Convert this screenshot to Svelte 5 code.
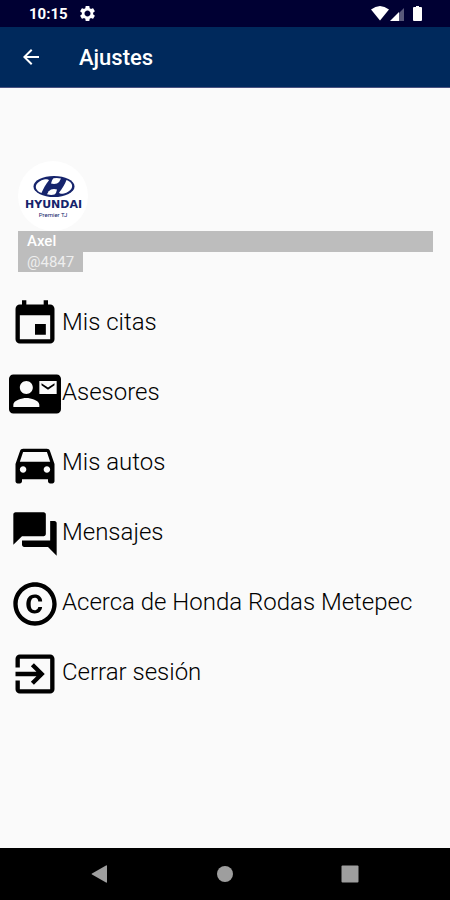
<script>
    let { time = "10:15", title = "Ajustes" } = $props();

    let user = $state({ name: "Axel", handle: "@4847" });

    // Icon paths are drawn on a 24x24 grid
    const items = [
        {
            label: "Mis citas",
            icon: "M17 12h-5v5h5v-5zM16 1v2H8V1H6v2H5c-1.11 0-1.99.9-1.99 2L3 19c0 1.1.89 2 2 2h14c1.1 0 2-.9 2-2V5c0-1.1-.9-2-2-2h-1V1h-2zm3 18H5V8h14v11z",
        },
        {
            label: "Asesores",
            icon: "M21 8V7l-3 2-3-2v1l3 2 3-2zm1-5H2C.9 3 0 3.900 0 5v14c0 1.100.9 2 2 2h20c1.100 0 1.990-.9 1.990-2L24 5c0-1.100-.9-2-2-2zM8 6c1.660 0 3 1.340 3 3s-1.340 3-3 3-3-1.340-3-3 1.340-3 3-3zm6 12H2v-1c0-2 4-3.100 6-3.100s6 1.100 6 3.100v1zm8-6h-8V6h8v6z",
        },
        {
            label: "Mis autos",
            icon: "M18.920 6.010C18.720 5.420 18.160 5 17.500 5h-11c-.66 0-1.210.42-1.420 1.010L3 12v8c0 .55.45 1 1 1h1c.55 0 1-.45 1-1v-1h12v1c0 .55.45 1 1 1h1c.55 0 1-.45 1-1v-8l-2.080-5.990zM6.500 16c-.83 0-1.500-.67-1.500-1.500S5.670 13 6.500 13s1.500.67 1.500 1.500S7.330 16 6.500 16zm11 0c-.83 0-1.500-.67-1.500-1.500s.67-1.500 1.500-1.500 1.500.67 1.500 1.500-.67 1.500-1.500 1.500zM5 11l1.500-4.500h11L19 11H5z",
        },
        {
            label: "Mensajes",
            icon: "M21 6h-2v9H6v2c0 .55.45 1 1 1h11l4 4V7c0-.55-.45-1-1-1zm-4 6V3c0-.55-.45-1-1-1H3c-.55 0-1 .45-1 1v14l4-4h10c.55 0 1-.45 1-1z",
        },
        {
            label: "Acerca de Honda Rodas Metepec",
            icon: "M10.080 10.860c.05-.33.16-.62.3-.87s.34-.46.59-.62c.24-.15.54-.22.91-.23.23.01.44.05.63.13.2.09.38.21.52.36s.25.33.34.53.13.42.14.64h1.790c-.02-.47-.11-.9-.28-1.290s-.4-.73-.7-1.010-.66-.5-1.080-.66-.88-.23-1.390-.23c-.65 0-1.220.11-1.700.34s-.88.53-1.200.92-.56.84-.71 1.360S8 11.290 8 11.870v.27c0 .58.08 1.120.23 1.640s.39.97.71 1.350.72.69 1.200.91 1.050.34 1.700.34c.47 0 .91-.08 1.320-.23s.77-.36 1.080-.63.56-.58.74-.94.29-.74.3-1.150h-1.790c-.01.21-.06.4-.15.58s-.21.33-.36.46-.32.23-.52.3c-.19.07-.39.09-.6.1-.36-.01-.66-.08-.89-.23-.25-.16-.45-.37-.59-.62s-.25-.55-.3-.88-.08-.67-.08-1v-.27c0-.35.03-.68.08-1.010zM12 2C6.480 2 2 6.480 2 12s4.480 10 10 10 10-4.480 10-10S17.520 2 12 2zm0 18c-4.410 0-8-3.590-8-8s3.590-8 8-8 8 3.590 8 8-3.590 8-8 8z",
        },
        {
            label: "Cerrar sesión",
            icon: "M10.090 15.590L11.500 17l5-5-5-5-1.410 1.410L12.670 11H3v2h9.670l-2.580 2.590zM19 3H5c-1.110 0-2 .9-2 2v4h2V5h14v14H5v-4H3v4c0 1.100.89 2 2 2h14c1.100 0 2-.9 2-2V5c0-1.100-.9-2-2-2z",
        },
    ];
</script>

<div class="screen">
    <div class="status-bar">
        <span class="time">{time}</span>
        <svg class="gear" viewBox="2 2 20 20" aria-hidden="true">
            <path fill-rule="evenodd" d="M19.430 12.980c.04-.32.07-.64.07-.98s-.03-.66-.07-.98l2.110-1.650c.19-.15.24-.42.12-.64l-2-3.460c-.12-.22-.39-.3-.61-.22l-2.490 1c-.52-.4-1.080-.73-1.690-.98l-.38-2.650C14.460 2.180 14.250 2 14 2h-4c-.25 0-.46.18-.49.42l-.38 2.650c-.61.25-1.170.59-1.690.98l-2.490-1c-.23-.09-.49 0-.61.22l-2 3.460c-.13.22-.07.49.12.64l2.110 1.650c-.04.32-.07.65-.07.98s.03.66.07.98l-2.110 1.650c-.19.15-.24.42-.12.64l2 3.460c.12.22.39.3.61.22l2.490-1c.52.4 1.080.73 1.690.98l.38 2.650c.03.24.24.42.49.42h4c.25 0 .46-.18.49-.42l.38-2.650c.61-.25 1.170-.59 1.690-.98l2.490 1c.23.09.49 0 .61-.22l2-3.460c.12-.22.07-.49-.12-.64l-2.110-1.650zM12 16c-2.200 0-4-1.800-4-4s1.800-4 4-4 4 1.800 4 4-1.800 4-4 4z" />
        </svg>
        <svg class="signals" viewBox="0 0 52 18" aria-hidden="true">
            <path d="M0 4.500Q9-2.500 18 4.500L9 15.500z" />
            <path d="M33 3v13h-5V8z" opacity="0.35" />
            <path d="M28 7v9h-9z" />
            <path d="M43 2h2V1h3v1h2q1 0 1 1v12q0 1-1 1h-7q-1 0-1-1V3q0-1 1-1z" />
        </svg>
    </div>

    <header class="app-bar">
        <button type="button" class="back" aria-label="Atrás">
            <svg viewBox="0 0 24 24" aria-hidden="true">
                <path d="M20 11H7.830l5.590-5.590L12 4l-8 8 8 8 1.410-1.410L7.830 13H20v-2z" />
            </svg>
        </button>
        <h1>{title}</h1>
    </header>

    <main>
        <section class="profile">
            <svg class="avatar" viewBox="0 0 70 70" role="img" aria-label="Hyundai Premier TJ">
                <circle cx="35" cy="35" r="35" fill="#fff" />
                <ellipse cx="36" cy="25.500" rx="20.500" ry="10.500" fill="#16246c" />
                <!-- white areas around the slanted H -->
                <path fill="#fff" d="M26 18.500C19 20.500 16 25 19 29C20 30.500 22 31.500 23.500 32C25 28 28 23 31 19.200C30 18 28 18 26 18.500z" />
                <path fill="#fff" d="M46 32.500C53 30.500 56 26 53 22C52 20.500 50 19.500 48.500 19C47 23 44 28 41 31.800C42 33 44 33 46 32.500z" />
                <path fill="#fff" d="M35.500 17.300Q39 16.500 43 17.500Q41.500 21.500 39 22.500Q36 23.300 33 22.500Q33.500 19 35.500 17.300z" />
                <path fill="#fff" d="M36.500 33.500Q33 34.500 29 33.200Q30.500 29.500 33 28.500Q36 27.700 39 28.500Q38.500 32 36.500 33.500z" />
                <text class="brand" x="35.500" y="47" text-anchor="middle">HYUNDAI</text>
                <text class="dealer" x="35" y="56" text-anchor="middle">Premier TJ</text>
            </svg>
            <div class="name">{user.name}</div>
            <div class="handle">{user.handle}</div>
        </section>

        <nav>
            {#each items as item}
                <button type="button" class="item">
                    <svg viewBox="0 0 24 24" aria-hidden="true">
                        <path d={item.icon} />
                    </svg>
                    <span>{item.label}</span>
                </button>
            {/each}
        </nav>
    </main>

    <footer class="nav-bar">
        <button type="button" aria-label="Volver">
            <svg viewBox="0 0 18 18" aria-hidden="true"><path d="M16 1v16q0 1-1 .5L1 9.500q-1-.5 0-1L15 .5q1-.5 1 .5z" /></svg>
        </button>
        <button type="button" aria-label="Inicio">
            <svg viewBox="0 0 18 18" aria-hidden="true"><circle cx="9" cy="9" r="8" /></svg>
        </button>
        <button type="button" aria-label="Recientes">
            <svg viewBox="0 0 18 18" aria-hidden="true"><rect width="17" height="17" x="0.500" y="0.500" rx="1" /></svg>
        </button>
    </footer>
</div>

<style>
    :global(body) {
        background: #fafafa;
    }

    .screen {
        display: flex;
        flex-direction: column;
        min-height: 100vh;
        background: #fafafa;
        color: #000;
        font-family: Roboto, "Liberation Sans", sans-serif;
    }

    button {
        padding: 0;
        border: 0;
        background: none;
        color: inherit;
        font: inherit;
        cursor: pointer;
    }

    svg {
        display: block;
        fill: currentColor;
    }

    .status-bar {
        display: flex;
        align-items: center;
        height: 27px;
        padding: 0 27px 0 29px;
        background: #000033;
        color: #fff;
    }

    .time {
        font-size: 15px;
        font-weight: 700;
        line-height: 28px;
    }

    .gear {
        width: 15px;
        height: 15px;
        margin-left: 12px;
    }

    .signals {
        width: 52px;
        height: 18px;
        margin-left: auto;
    }

    .app-bar {
        display: flex;
        align-items: center;
        gap: 36px;
        height: 60px;
        padding: 0 19px;
        border-bottom: 1px solid #4a5280;
        background: #00295c;
        color: #fff;
    }

    .back svg {
        width: 24px;
        height: 24px;
    }

    h1 {
        margin: 0;
        padding-top: 2px;
        font-size: 22px;
        font-weight: 500;
        line-height: 28px;
    }

    main {
        flex: 1;
        padding-top: 73px;
    }

    .profile {
        padding: 0 17px 0 18px;
        font-size: 15px;
        line-height: 20px;
    }

    .avatar {
        width: 70px;
        height: 70px;
    }

    .brand {
        fill: #16246c;
        font-family: "DejaVu Sans", sans-serif;
        font-size: 11px;
        font-weight: 700;
    }

    .dealer {
        fill: #16246c;
        font-size: 6px;
    }

    .name,
    .handle {
        padding: 0 9px;
        background: #bdbdbd;
        color: #fff;
    }

    .name {
        font-weight: 500;
        line-height: 21px;
    }

    .handle {
        width: fit-content;
        color: #eee;
    }

    nav {
        padding: 17px 9px;
    }

    .item {
        display: flex;
        align-items: center;
        gap: 1px;
        width: 100%;
        height: 70px;
        font-size: 24px;
        font-weight: 300;
        line-height: 28px;
        text-align: left;
    }

    .item svg {
        flex: none;
        width: 52px;
        height: 52px;
    }

    .item span {
        padding-bottom: 4px;
    }

    .nav-bar {
        display: flex;
        justify-content: center;
        gap: 107px;
        height: 52px;
        background: #000;
        color: #9e9e9e;
    }

    .nav-bar svg {
        width: 18px;
        height: 18px;
    }
</style>
